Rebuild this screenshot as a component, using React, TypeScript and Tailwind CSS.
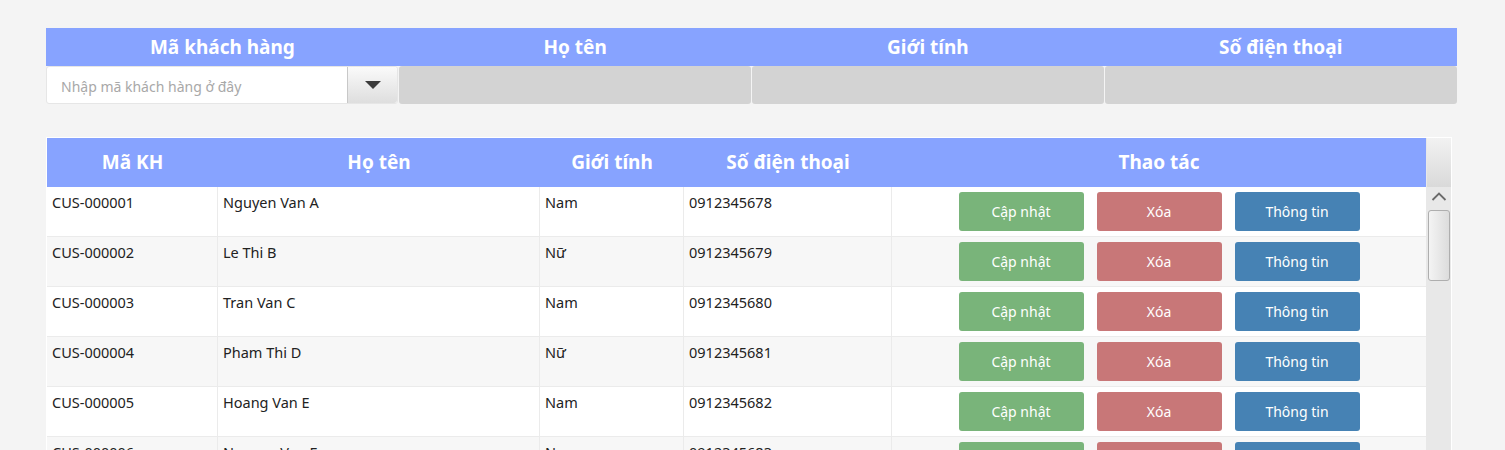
type Customer = { id: string; name: string; gender: string; phone: string };

const customers: Customer[] = [
  { id: "CUS-000001", name: "Nguyen Van A", gender: "Nam", phone: "0912345678" },
  { id: "CUS-000002", name: "Le Thi B", gender: "Nữ", phone: "0912345679" },
  { id: "CUS-000003", name: "Tran Van C", gender: "Nam", phone: "0912345680" },
  { id: "CUS-000004", name: "Pham Thi D", gender: "Nữ", phone: "0912345681" },
  { id: "CUS-000005", name: "Hoang Van E", gender: "Nam", phone: "0912345682" },
  { id: "CUS-000006", name: "Nguyen Van F", gender: "Nam", phone: "0912345683" },
];

const COLS = "grid grid-cols-[171px_322px_144px_208px_534px]";

export default function App() {
  return (
    <div
      className="w-[1505px] h-[450px] overflow-hidden bg-[#f4f4f4] pt-[28px] pl-[46px]"
      style={{ fontFamily: '"Noto Sans", "Open Sans", sans-serif' }}
    >
      {/* ── Bộ lọc tìm kiếm ── */}
      <div className="w-[1411px]">
        <div className="grid grid-cols-4 h-[38px] bg-[#87a3ff] text-white text-[19px] font-bold">
          {["Mã khách hàng", "Họ tên", "Giới tính", "Số điện thoại"].map((t) => (
            <div key={t} className="flex items-center justify-center">
              {t}
            </div>
          ))}
        </div>
        <div className="grid grid-cols-4 gap-[1px] h-[38px]">
          <div className="flex bg-white rounded-[3px] border border-[#e6e6e6]">
            <div className="flex-1 flex items-center pl-[14px] pt-[2px] text-[14px] text-[#a8a8a8]">
              Nhập mã khách hàng ở đây
            </div>
            <div className="w-[50px] flex items-center justify-center border-l border-[#c8c8c8] rounded-r-[3px] bg-gradient-to-b from-[#fafafa] to-[#dedede]">
              <span className="w-0 h-0 border-l-[8px] border-r-[8px] border-t-[8px] border-l-transparent border-r-transparent border-t-[#3c3c3c]" />
            </div>
          </div>
          <div className="bg-[#d3d3d3] rounded-[3px]" />
          <div className="bg-[#d3d3d3] rounded-[3px]" />
          <div className="bg-[#d3d3d3] rounded-[3px]" />
        </div>
      </div>

      {/* ── Bảng khách hàng ── */}
      <div className="mt-[33px] w-[1406px] border border-white flex bg-white">
        <div className="w-[1379px]">
          <div className={`${COLS} h-[49px] bg-[#87a3ff] text-white text-[19px] font-bold`}>
            {["Mã KH", "Họ tên", "Giới tính", "Số điện thoại", "Thao tác"].map((t) => (
              <div key={t} className="flex items-center justify-center">
                {t}
              </div>
            ))}
          </div>
          {customers.map((c, i) => (
            <div
              key={c.id}
              className={`${COLS} h-[50px] border-b border-[#ebebeb] text-[14.5px] text-[#222] ${
                i % 2 === 1 ? "bg-[#f7f7f7]" : "bg-white"
              }`}
            >
              <div className="pl-[5px] pt-[5px] leading-[20px] border-r border-[#ebebeb]">{c.id}</div>
              <div className="pl-[5px] pt-[5px] leading-[20px] border-r border-[#ebebeb]">{c.name}</div>
              <div className="pl-[5px] pt-[5px] leading-[20px] border-r border-[#ebebeb]">{c.gender}</div>
              <div className="pl-[5px] pt-[5px] leading-[20px] border-r border-[#ebebeb]">{c.phone}</div>
              <div className="flex items-start justify-center gap-[13px] pt-[5px] text-[14px] text-white">
                <button className="w-[125px] h-[39px] rounded-[3px] bg-[#79b47a]">Cập nhật</button>
                <button className="w-[125px] h-[39px] rounded-[3px] bg-[#c87778]">Xóa</button>
                <button className="w-[125px] h-[39px] rounded-[3px] bg-[#4682b4]">Thông tin</button>
              </div>
            </div>
          ))}
        </div>

        {/* Thanh cuộn */}
        <div className="w-[25px] flex flex-col">
          <div className="h-[49px] bg-gradient-to-b from-[#f2f2f2] to-[#d9d9d9] border-l border-[#e8e8e8]" />
          <div className="flex-1 bg-[#e8e8e8] flex flex-col items-center">
            <svg width="16" height="9" viewBox="0 0 16 9" className="mt-[5px]">
              <polyline points="1.5,8 8,1.5 14.5,8" fill="none" stroke="#6a6a6a" strokeWidth="1.8" />
            </svg>
            <div className="mt-[9px] w-[22px] h-[71px] rounded-[3px] border border-[#aeaeae] bg-gradient-to-r from-[#f4f4f4] to-[#dcdcdc]" />
          </div>
        </div>
      </div>
    </div>
  );
}
